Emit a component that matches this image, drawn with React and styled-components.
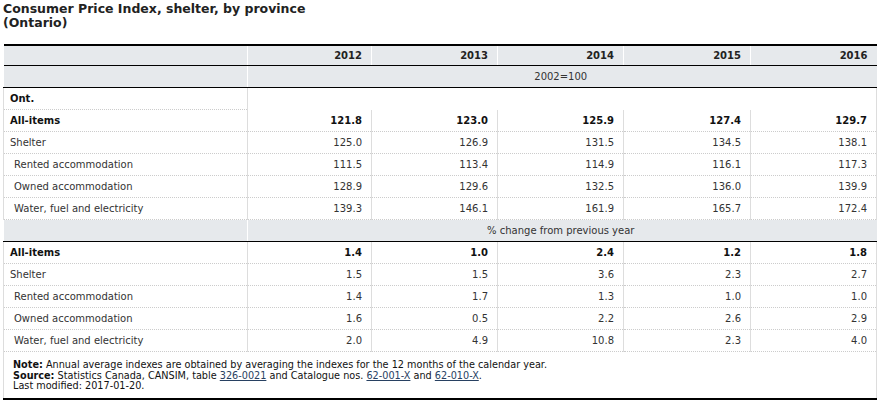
import React from "react";
import styled, { createGlobalStyle } from "styled-components";

const Global = createGlobalStyle`
  html, body { margin: 0; padding: 0; background: #fff; }
  body { font-family: "DejaVu Sans", Verdana, sans-serif; color: #333; }
`;

const Page = styled.div`
  padding: 2px 0 0 3px;
  width: 873px;
`;

const Title = styled.h1`
  margin: 0 0 14px 0;
  font-size: 12.5px;
  line-height: 14px;
  font-weight: bold;
  color: #222;
`;

const Table = styled.table`
  width: 873px;
  table-layout: fixed;
  border-collapse: collapse;
  font-size: 10px;
  line-height: 12px;
`;

const HeadCell = styled.th`
  background: #e6e9ec;
  border-top: 2px solid #000;
  border-bottom: 1px solid #000;
  border-left: 1px solid #fff;
  padding: 4px 9px 3px 6px;
  text-align: right;
  font-weight: bold;
  color: #222;
  &:first-child { border-left: none; }
`;

const GrayCell = styled.td`
  background: #e6e9ec;
  border-bottom: 1px solid #000;
  border-left: 1px solid #fff;
  padding: 5px 9px 4px 6px;
  text-align: center;
  color: #333;
  &:first-child { border-left: none; }
`;

const LabelCell = styled.th`
  text-align: left;
  font-weight: ${(p) => (p.$bold ? "bold" : "normal")};
  color: ${(p) => (p.$bold ? "#111" : "#333")};
  padding: 5px 6px 4px ${(p) => (p.$indent ? 10 : 6)}px;
  border-bottom: 1px dotted #ccc;
  border-left: 1px solid #ddd;
  border-right: 1px solid #ddd;
  white-space: nowrap;
`;

const NumCell = styled.td`
  text-align: right;
  font-weight: ${(p) => (p.$bold ? "bold" : "normal")};
  color: ${(p) => (p.$bold ? "#111" : "#333")};
  padding: 5px 9px 4px 6px;
  border-bottom: 1px dotted #ccc;
  border-left: 1px solid #ddd;
  border-right: 1px solid #ddd;
`;

const EmptyCell = styled.td`
  border-right: 1px solid #ddd;
`;

const FootCell = styled.td`
  padding: 8px 9px 6px 9px;
  border-left: 1px solid #ddd;
  border-right: 1px solid #ddd;
  border-bottom: 2px solid #000;
  font-size: 9.7px;
  line-height: 10.5px;
  color: #111;
`;

const Link = styled.a`
  color: #284162;
  text-decoration: underline;
`;

const years = ["2012", "2013", "2014", "2015", "2016"];

const indexRows = [
  { label: "All-items", bold: true, v: ["121.8", "123.0", "125.9", "127.4", "129.7"] },
  { label: "Shelter", v: ["125.0", "126.9", "131.5", "134.5", "138.1"] },
  { label: "Rented accommodation", indent: true, v: ["111.5", "113.4", "114.9", "116.1", "117.3"] },
  { label: "Owned accommodation", indent: true, v: ["128.9", "129.6", "132.5", "136.0", "139.9"] },
  { label: "Water, fuel and electricity", indent: true, v: ["139.3", "146.1", "161.9", "165.7", "172.4"] },
];

const changeRows = [
  { label: "All-items", bold: true, v: ["1.4", "1.0", "2.4", "1.2", "1.8"] },
  { label: "Shelter", v: ["1.5", "1.5", "3.6", "2.3", "2.7"] },
  { label: "Rented accommodation", indent: true, v: ["1.4", "1.7", "1.3", "1.0", "1.0"] },
  { label: "Owned accommodation", indent: true, v: ["1.6", "0.5", "2.2", "2.6", "2.9"] },
  { label: "Water, fuel and electricity", indent: true, v: ["2.0", "4.9", "10.8", "2.3", "4.0"] },
];

const DataRow = ({ row }) => (
  <tr>
    <LabelCell scope="row" $bold={row.bold} $indent={row.indent}>
      {row.label}
    </LabelCell>
    {row.v.map((x, i) => (
      <NumCell key={i} $bold={row.bold}>
        {x}
      </NumCell>
    ))}
  </tr>
);

export default function App() {
  return (
    <Page>
      <Global />
      <Title>
        Consumer Price Index, shelter, by province
        <br />
        (Ontario)
      </Title>
      <Table>
        <colgroup>
          <col style={{ width: 244 }} />
          <col style={{ width: 124 }} />
          <col style={{ width: 126 }} />
          <col style={{ width: 126 }} />
          <col style={{ width: 127 }} />
          <col style={{ width: 126 }} />
        </colgroup>
        <thead>
          <tr>
            <HeadCell />
            {years.map((y) => (
              <HeadCell key={y}>{y}</HeadCell>
            ))}
          </tr>
          <tr>
            <GrayCell />
            <GrayCell colSpan={5}>2002=100</GrayCell>
          </tr>
        </thead>
        <tbody>
          <tr>
            <LabelCell scope="row" $bold>
              Ont.
            </LabelCell>
            <EmptyCell colSpan={5} />
          </tr>
          {indexRows.map((r, i) => (
            <DataRow key={i} row={r} />
          ))}
          <tr>
            <GrayCell />
            <GrayCell colSpan={5}>% change from previous year</GrayCell>
          </tr>
          {changeRows.map((r, i) => (
            <DataRow key={i} row={r} />
          ))}
        </tbody>
        <tfoot>
          <tr>
            <FootCell colSpan={6}>
              <b>Note:</b> Annual average indexes are obtained by averaging the indexes for the 12 months of the calendar year.
              <br />
              <b>Source:</b> Statistics Canada, CANSIM, table <Link href="#">326-0021</Link> and Catalogue nos.{" "}
              <Link href="#">62-001-X</Link> and <Link href="#">62-010-X</Link>.
              <br />
              Last modified: 2017-01-20.
            </FootCell>
          </tr>
        </tfoot>
      </Table>
    </Page>
  );
}
